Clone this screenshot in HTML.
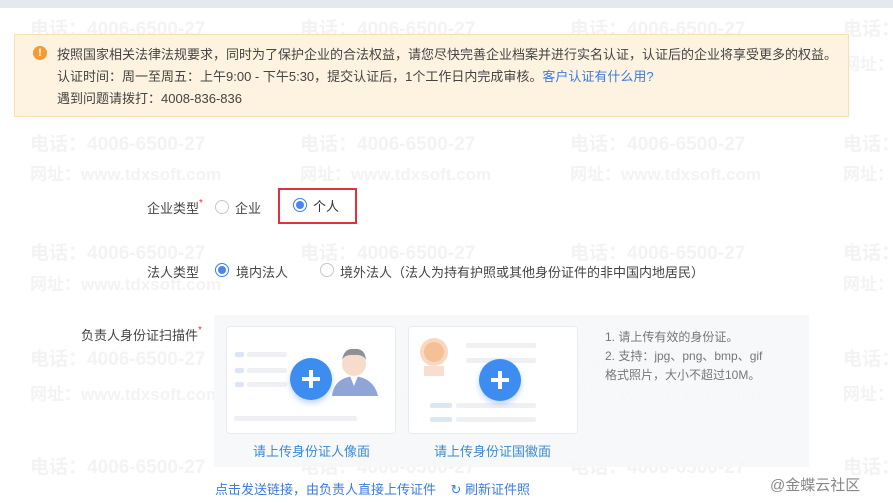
<!DOCTYPE html>
<html><head><meta charset="utf-8"><style>
*{margin:0;padding:0;box-sizing:border-box}
body{width:893px;height:503px;overflow:hidden;background:#fff;position:relative;font-family:"Liberation Sans","Noto Sans CJK SC",sans-serif;font-size:13px;color:#333}
.wm{position:absolute;font-weight:bold;font-size:19px;color:#f3f3f3;white-space:nowrap;font-family:"Liberation Sans","Noto Sans CJK SC",sans-serif}
.wm2{font-size:17px}
.abs{position:absolute;white-space:nowrap}
.radio{position:absolute;width:14px;height:14px;border-radius:50%;border:1px solid #c8c8c8;background:#fff}
.radio.on{border-color:#3d7ef0}
.radio.on::after{content:"";position:absolute;left:2px;top:2px;width:8px;height:8px;border-radius:50%;background:#4b84ee}
.card{position:absolute;background:#fff;border:1px solid #e8ebf0;border-radius:4px}
.bar{position:absolute;background:#eef0f4;height:6px;border-radius:2px}
.bl{position:absolute;background:#dce6f4;height:6px;border-radius:2px}
.plus{position:absolute;width:42px;height:42px;border-radius:50%;background:#3d8cf0;box-shadow:0 3px 6px rgba(60,130,230,.35)}
.plus::before{content:"";position:absolute;left:12px;top:19px;width:18px;height:4px;background:#fff}
.plus::after{content:"";position:absolute;left:19px;top:12px;width:4px;height:18px;background:#fff}
</style></head><body>
<div style="position:absolute;left:0;top:0;width:893px;height:8px;background:#e4e8f0"></div>

<div class="wm" style="left:30px;top:14px">电话：4006-6500-27</div>
<div class="wm" style="left:300px;top:14px">电话：4006-6500-27</div>
<div class="wm" style="left:570px;top:14px">电话：4006-6500-27</div>
<div class="wm" style="left:843px;top:14px">电话：</div>
<div class="wm wm2" style="left:30px;top:50px">网址：www.tdxsoft.com</div>
<div class="wm wm2" style="left:300px;top:50px">网址：www.tdxsoft.com</div>
<div class="wm wm2" style="left:570px;top:50px">网址：www.tdxsoft.com</div>
<div class="wm wm2" style="left:843px;top:50px">网址：</div>
<div class="wm" style="left:30px;top:129px">电话：4006-6500-27</div>
<div class="wm" style="left:300px;top:129px">电话：4006-6500-27</div>
<div class="wm" style="left:570px;top:129px">电话：4006-6500-27</div>
<div class="wm" style="left:843px;top:129px">电话：</div>
<div class="wm wm2" style="left:30px;top:160px">网址：www.tdxsoft.com</div>
<div class="wm wm2" style="left:300px;top:160px">网址：www.tdxsoft.com</div>
<div class="wm wm2" style="left:570px;top:160px">网址：www.tdxsoft.com</div>
<div class="wm wm2" style="left:843px;top:160px">网址：</div>
<div class="wm" style="left:30px;top:238px">电话：4006-6500-27</div>
<div class="wm" style="left:300px;top:238px">电话：4006-6500-27</div>
<div class="wm" style="left:570px;top:238px">电话：4006-6500-27</div>
<div class="wm" style="left:843px;top:238px">电话：</div>
<div class="wm wm2" style="left:30px;top:270px">网址：www.tdxsoft.com</div>
<div class="wm wm2" style="left:843px;top:270px">网址：</div>
<div class="wm" style="left:30px;top:344px">电话：4006-6500-27</div>
<div class="wm" style="left:300px;top:344px">电话：4006-6500-27</div>
<div class="wm" style="left:570px;top:344px">电话：4006-6500-27</div>
<div class="wm" style="left:843px;top:344px">电话：</div>
<div class="wm wm2" style="left:30px;top:380px">网址：www.tdxsoft.com</div>
<div class="wm wm2" style="left:300px;top:380px">网址：www.tdxsoft.com</div>
<div class="wm wm2" style="left:570px;top:380px">网址：www.tdxsoft.com</div>
<div class="wm wm2" style="left:843px;top:380px">网址：</div>
<div class="wm" style="left:30px;top:452px">电话：4006-6500-27</div>
<div class="wm" style="left:300px;top:452px">电话：4006-6500-27</div>
<div class="wm" style="left:570px;top:452px">电话：4006-6500-27</div>
<div class="wm" style="left:843px;top:452px">电话：</div>

<div style="position:absolute;left:14px;top:34px;width:835px;height:83px;background:rgba(253,242,222,.93);border:1px solid #f8deb0"></div>
<div style="position:absolute;left:33px;top:46px;width:14px;height:14px;border-radius:50%;background:#f39a33;color:#fff;font-size:11px;font-weight:bold;text-align:center;line-height:14px">!</div>
<div class="abs" style="left:57px;top:44px;font-size:13px;line-height:22px;color:#444">按照国家相关法律法规要求，同时为了保护企业的合法权益，请您尽快完善企业档案并进行实名认证，认证后的企业将享受更多的权益。<br>认证时间：周一至周五：上午9:00 - 下午5:30，提交认证后，1个工作日内完成审核。<span style="color:#3b7be0">客户认证有什么用?</span><br>遇到问题请拨打：4008-836-836</div>

<div class="abs" style="left:147px;top:198px;color:#444">企业类型<span style="color:#e33;font-size:10px;vertical-align:top">*</span></div>
<div class="radio" style="left:215px;top:200px"></div>
<div class="abs" style="left:235px;top:198px;color:#444">企业</div>
<div style="position:absolute;left:278px;top:188px;width:79px;height:36px;border:2px solid #e0323a;background:#fff"></div>
<div class="radio on" style="left:293px;top:198px"></div>
<div class="abs" style="left:313px;top:196px;color:#333">个人</div>

<div class="abs" style="left:147px;top:262px;color:#444">法人类型</div>
<div class="radio on" style="left:215px;top:263px"></div>
<div class="abs" style="left:236px;top:262px;color:#444">境内法人</div>
<div class="radio" style="left:320px;top:263px"></div>
<div class="abs" style="left:340px;top:262px;color:#444">境外法人（法人为持有护照或其他身份证件的非中国内地居民）</div>

<div class="abs" style="left:81px;top:325px;color:#444">负责人身份证扫描件<span style="color:#e33;font-size:10px;vertical-align:top">*</span></div>
<div style="position:absolute;left:214px;top:315px;width:595px;height:152px;background:rgba(245,247,250,.9)"></div>

<div class="card" style="left:226px;top:326px;width:170px;height:108px"></div>
<div class="bl" style="left:235px;top:352px;width:9px;height:5px"></div>
<div class="bar" style="left:247px;top:352px;width:40px;height:5px"></div>
<div class="bl" style="left:235px;top:368px;width:9px;height:5px"></div>
<div class="bar" style="left:247px;top:368px;width:40px;height:5px"></div>
<div class="bl" style="left:235px;top:382px;width:9px;height:5px"></div>
<div class="bar" style="left:247px;top:382px;width:40px;height:5px"></div>
<div class="bar" style="left:234px;top:416px;width:123px;height:5px"></div>
<svg style="position:absolute;left:330px;top:346px" width="52" height="50"><circle cx="24" cy="18" r="12" fill="#f7dccb"/><path d="M12 14 Q14 2 24 3 Q35 2 36 14 Q33 8 24 9 Q15 8 12 14Z" fill="#8d9099"/><path d="M2 50 Q4 32 24 30 Q44 32 48 50Z" fill="#8fa5d8"/><path d="M20 30 L24 40 L28 30Z" fill="#fff"/></svg>
<div class="plus" style="left:290px;top:358px"></div>
<div class="abs" style="left:253px;top:441px;color:#3b8ad6">请上传身份证人像面</div>

<div class="card" style="left:408px;top:326px;width:170px;height:108px"></div>
<svg style="position:absolute;left:416px;top:336px" width="36" height="50"><circle cx="18" cy="16" r="14" fill="#f6c8a8" opacity=".7"/><circle cx="18" cy="16" r="10" fill="#f0a868" opacity=".5"/><rect x="8" y="30" width="20" height="10" fill="#f3bca0" opacity=".5"/></svg>
<div class="bar" style="left:466px;top:343px;width:70px;height:5px"></div>
<div class="bar" style="left:466px;top:358px;width:70px;height:5px"></div>
<div class="bl" style="left:430px;top:403px;width:22px;height:5px"></div>
<div class="bar" style="left:456px;top:403px;width:80px;height:5px"></div>
<div class="bl" style="left:430px;top:417px;width:22px;height:5px"></div>
<div class="bar" style="left:456px;top:417px;width:80px;height:5px"></div>
<div class="plus" style="left:479px;top:359px"></div>
<div class="abs" style="left:434px;top:441px;color:#3b8ad6">请上传身份证国徽面</div>

<div class="abs" style="left:605px;top:328px;font-size:12px;line-height:19px;color:#777">1. 请上传有效的身份证。<br>2. 支持：jpg、png、bmp、gif<br>格式照片，大小不超过10M。</div>

<div class="abs" style="left:215px;top:479px;color:#3b7be0">点击发送链接，由负责人直接上传证件 &nbsp;&nbsp;&nbsp;↻ 刷新证件照</div>
<div class="abs" style="left:770px;top:474px;font-size:15px;color:#888">@金蝶云社区</div>
</body></html>
